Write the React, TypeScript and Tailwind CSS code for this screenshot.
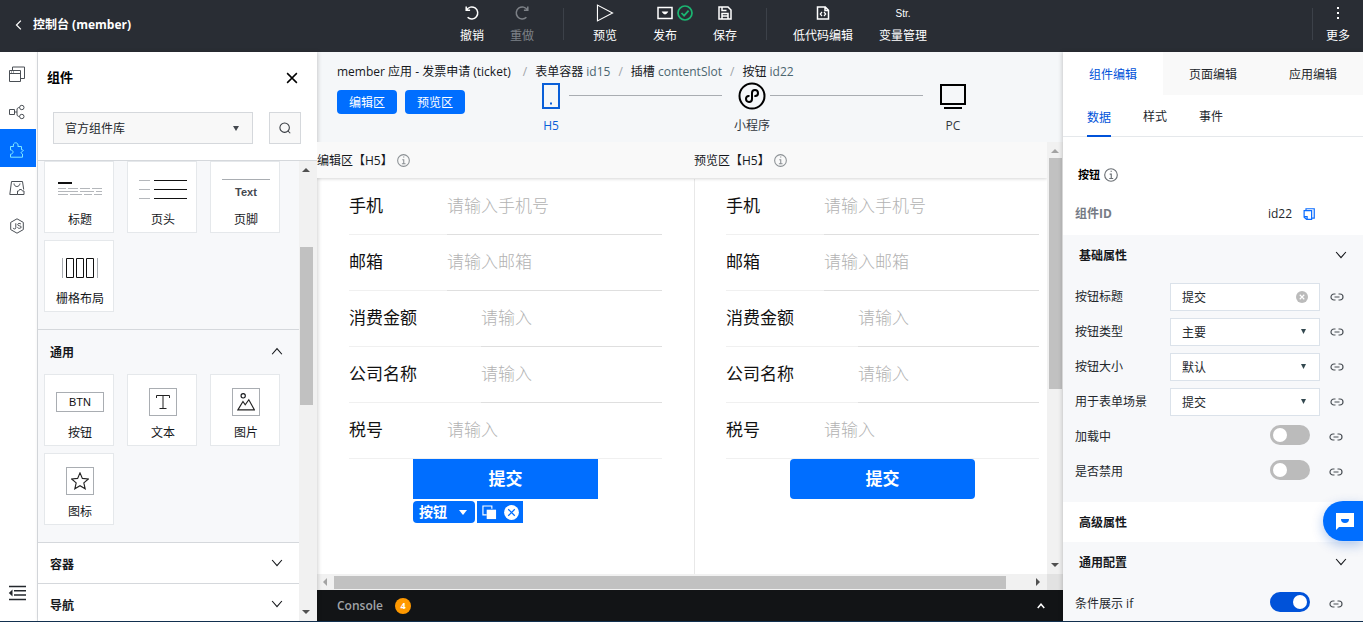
import type { ReactNode } from 'react';

type Children = { children: ReactNode };

function Icon({ size = 16, stroke = 1, children }: { size?: number; stroke?: number; children: ReactNode }) {
  return (
    <svg width={size} height={size} viewBox="0 0 16 16" fill="none" stroke="currentColor" strokeWidth={stroke} aria-hidden="true" className="shrink-0">
      {children}
    </svg>
  );
}

function ToolButton({ label, icon, wide, muted }: { label: string; icon: ReactNode; wide?: 'sm' | 'md' | 'lg'; muted?: boolean }) {
  const width = wide === 'lg' ? 'w-20' : wide === 'md' ? 'w-[60px]' : 'w-[50px]';
  return (
    <button type="button" className={`flex shrink-0 flex-col items-center gap-1 ${width} ${muted ? 'text-[#7d8187]' : 'text-white'}`}>
      <span className="flex h-[18px] items-center justify-center">{icon}</span>
      <span className="leading-5">{label}</span>
    </button>
  );
}

function Header() {
  return (
    <header className="flex h-[52px] shrink-0 bg-[#292d34] text-xs text-white">
      <div className="flex min-w-0 flex-1 items-center pb-[2px] pl-[14px]">
        <a href="#console" className="flex items-center gap-[9px] whitespace-nowrap font-bold">
          <Icon size={10} stroke={2}>
            <path d="M11 1 4 8l7 7" />
          </Icon>
          控制台 (member)
        </a>
      </div>
      <nav className="flex items-start pl-[13px] pt-1" aria-label="工具栏">
        <ToolButton
          label="撤销"
          icon={
            <Icon stroke={1.5}>
              <path d="M2.2 1.5v3.7h3.9M2.5 5A6 6 0 1 1 3.6 12.3" />
            </Icon>
          }
        />
        <ToolButton
          label="重做"
          muted
          icon={
            <Icon stroke={1.5}>
              <path d="M13.8 1.5v3.7H9.9M13.5 5a6 6 0 1 0-1.1 7.3" />
            </Icon>
          }
        />
        <i className="ml-4 mr-[11px] mt-1 h-8 w-px bg-[#3c4149]" />
        <ToolButton
          label="预览"
          wide="md"
          icon={
            <Icon size={18}>
              <path d="M1.3 1v14l13.4-7z" />
            </Icon>
          }
        />
        <button type="button" className="flex w-[60px] shrink-0 flex-col items-center gap-1">
          <span className="relative flex h-[18px] items-center">
            <Icon stroke={1.5}>
              <path d="M1 2.5h14v11H1z" />
              <path d="M5 6.8h6L9 9H7z" fill="currentColor" strokeWidth=".5" />
            </Icon>
            <span className="absolute left-5 top-[1px] text-[#1bb571]">
              <Icon stroke={1.7}>
                <circle cx="8" cy="8" r="7" />
                <path d="m4.5 8 2.6 2.7 4.5-5" strokeWidth="1.8" />
              </Icon>
            </span>
          </span>
          <span className="leading-5">发布</span>
        </button>
        <ToolButton
          label="保存"
          wide="md"
          icon={
            <Icon stroke={1.5}>
              <path d="M2 2h9l3 3v9H2zM5 14V8.5h6V14M5 2v3.5h4.5M5 11h6" />
            </Icon>
          }
        />
        <i className="ml-[11px] mr-4 mt-1 h-8 w-px bg-[#3c4149]" />
        <ToolButton
          label="低代码编辑"
          wide="lg"
          icon={
            <Icon stroke={1.5}>
              <path d="M2.5 2h7.8L13.5 5.2V14h-11zM10 2v3.5h3.5" />
              <path d="M7 7 5.3 9 7 11M9 7l1.7 2L9 11" strokeWidth="1.2" />
            </Icon>
          }
        />
        <ToolButton label="变量管理" wide="lg" icon={<span className="pt-[2px] font-['Liberation_Sans',Arial,sans-serif] text-[10px]">Str.</span>} />
      </nav>
      <div className="flex min-w-0 flex-1 items-start justify-end pt-1">
        <i className="mt-1 h-8 w-px bg-[#3c4149]" />
        <ToolButton
          label="更多"
          icon={
            <Icon>
              <path d="M7 2h2v2H7zM7 7h2v2H7zM7 12h2v2H7z" fill="currentColor" stroke="none" />
            </Icon>
          }
        />
      </div>
    </header>
  );
}

function RailButton({ label, active, children }: { label: string; active?: boolean; children: ReactNode }) {
  return (
    <button type="button" aria-label={label} className={`flex h-[38px] w-9 items-center justify-center pb-px pr-[3px] pt-[5px] ${active ? 'bg-[#006eff] text-[#7fe8ff]' : 'text-[#4a4f55]'}`}>
      {children}
    </button>
  );
}

function Rail() {
  return (
    <nav className="flex w-[38px] shrink-0 flex-col border-r border-[#dcdfe3] bg-white pt-px" aria-label="侧栏">
      <RailButton label="页面">
        <Icon>
          <path d="M.5 4.500h11v11H.5zM.5 7.500h11M3.500 4.500v-3.500h12v11.500h-4M2 6h1M4 6h1" />
        </Icon>
      </RailButton>
      <RailButton label="数据">
        <Icon>
          <path d="M.5 5.500h5v5h-5zM5.500 8h2.500M10.500 3.500C8.500 3.500 8 4.500 8 6v4c0 1.500.5 2.500 2.500 2.500" />
          <circle cx="12.800" cy="3.500" r="2.200" />
          <circle cx="12.800" cy="12.500" r="2.200" />
        </Icon>
      </RailButton>
      <RailButton label="组件" active>
        <Icon>
          <path d="M1.500 4.500h3c-.6-2.100.3-3.700 2.200-3.700s2.800 1.600 2.200 3.700h3.600v3.200c2.300.2 2.500 1 .8 1.700-1.700.800-1.700 1.800.2 2.600v3.200h-12v-3c2-.2 2.500-1.200 2.500-2.200s-.6-1.900-2.500-2z" />
        </Icon>
      </RailButton>
      <RailButton label="素材">
        <Icon>
          <path d="M8.500 14.500H.8L2.500 1.500h11l1.200 8M5 3.500c.2 4 5.500 4 6 0M8.500 14.500v-3.500c1.500 0 2-.5 2-1.500h2c0 1 .5 1.500 2.500 1.500v3.500z" />
        </Icon>
      </RailButton>
      <RailButton label="脚本">
        <Icon>
          <path d="m8 .8 6.300 3.600v7.200L8 15.200l-6.300-3.600V4.400z" />
          <path d="M6.800 5.300v4.500c0 1.500-2.300 1.600-2.600.1M12 6.200c-.7-1.200-3.300-1-3.300.4 0 1.700 3.500.7 3.500 2.400 0 1.700-3 1.800-3.800.4" />
        </Icon>
      </RailButton>
      <button type="button" aria-label="收起" className="mb-5 mt-auto flex justify-center pr-[3px] text-[#23272c]">
        <svg width="18" height="16" viewBox="0 0 18 16" fill="none" stroke="currentColor" strokeWidth="1.600" aria-hidden="true">
          <path d="M1 1.500h17M6 5.800h12M6 10h12M1 14.500h17" />
          <path d="M4.500 4.500v7L.8 8z" fill="currentColor" stroke="none" />
        </svg>
      </button>
    </nav>
  );
}

function Chevron({ up }: { up?: boolean }) {
  return (
    <Icon size={12} stroke={1.5}>
      <path d={up ? 'm1.500 11 6.500-7.500 6.500 7.500' : 'm1.500 4 6.500 7.500 6.500-7.500'} />
    </Icon>
  );
}

function Card({ label, children }: { label: string; children: ReactNode }) {
  return (
    <button type="button" className="flex h-[72px] w-[70px] flex-col items-center border border-[#e5e8eb] bg-white pl-[2px] text-[#16181c]">
      <span className="flex h-[54px] items-center justify-center">{children}</span>
      <span className="-mt-[6px] leading-5">{label}</span>
    </button>
  );
}

function Framed({ children }: Children) {
  return <span className="flex h-7 w-7 items-center justify-center border border-[#a9adb2]">{children}</span>;
}

function Arrow({ dir, dark }: { dir: 'up' | 'down' | 'left' | 'right'; dark?: boolean }) {
  const d = { up: 'M0 6h8L4 2z', down: 'M0 2h8L4 6z', left: 'M6 0v8L2 4z', right: 'M2 0v8l4-4z' }[dir];
  return (
    <svg width="8" height="8" viewBox="0 0 8 8" fill={dark ? '#505050' : '#a3a3a3'} aria-hidden="true" className="shrink-0">
      <path d={d} />
    </svg>
  );
}

function ComponentPanel() {
  return (
    <aside className="z-10 flex w-[279px] shrink-0 flex-col bg-white shadow-[1px_0_4px_rgba(0,0,0,0.18)]">
      <div className="flex h-[52px] items-center justify-between pl-[9px] pr-[19px]">
        <h2 className="text-[13px] font-bold text-black">组件</h2>
        <button type="button" aria-label="关闭" className="text-black">
          <Icon size={12} stroke={2}>
            <path d="m1.500 1.500 13 13M14.500 1.500l-13 13" />
          </Icon>
        </button>
      </div>
      <div className="flex gap-4 pb-4 pl-[15px] pr-4 pt-2">
        <div className="relative flex-1">
          <select aria-label="组件库" className="h-8 w-full appearance-none border border-[#d5d8dc] bg-[#f8f8f8] pl-[11px] pt-[2px] text-[#23272c]">
            <option>官方组件库</option>
          </select>
          <svg width="6" height="6" viewBox="0 0 6 6" fill="#44494f" aria-hidden="true" className="pointer-events-none absolute right-[14px] top-[13px]">
            <path d="M0 1h6L3 6z" />
          </svg>
        </div>
        <button type="button" aria-label="搜索" className="flex h-8 w-8 items-center justify-center border border-[#d5d8dc] bg-[#f8f8f8] text-[#33383e]">
          <Icon size={12} stroke={1.4}>
            <circle cx="7.500" cy="7.500" r="6.300" />
            <path d="m12 12 3 3" />
          </Icon>
        </button>
      </div>
      <div className="flex min-h-0 flex-1 border-t border-[#d5d8dc]">
        <div className="min-w-0 flex-1 overflow-hidden bg-[#f7f8fa]">
          <section className="flex flex-wrap gap-x-[13px] gap-y-[7px] border-b border-[#d5d8dc] pb-[17px] pl-[6px]">
            <Card label="标题">
              <svg width="44" height="14" viewBox="0 0 44 14" stroke="#b4b7bb" aria-hidden="true">
                <path d="M0 1h14" stroke="#111" strokeWidth="2" />
                <path d="M0 6.500h8M10 6.500h10M22 6.500h10M34 6.500h10M0 9.500h20M22 9.500h14M38 9.500h6M0 12.500h10M12 12.500h12M26 12.500h8M36 12.500h8" />
              </svg>
            </Card>
            <Card label="页头">
              <svg width="48" height="20" viewBox="0 0 48 20" stroke="#111" aria-hidden="true">
                <path d="M15 1.500h33M15 10.500h33M15 19.500h33" />
                <path d="M0 1.500h11M0 10.500h11M0 19.500h11" stroke="#b4b7bb" />
              </svg>
            </Card>
            <Card label="页脚">
              <span className="flex w-12 flex-col items-center border-t border-[#a9adb2] pt-1 font-['Liberation_Sans',Arial,sans-serif] text-[11px] font-bold leading-4 text-[#44494f]">Text</span>
            </Card>
            <Card label="栅格布局">
              <svg width="36" height="22" viewBox="0 0 36 22" fill="none" stroke="#111" aria-hidden="true">
                <path d="M4.500 1.500h7v19h-7zM14.500 1.500h7v19h-7zM24.500 1.500h7v19h-7z" />
                <path d="M.5 1v20M35.500 1v20" stroke="#a9adb2" />
              </svg>
            </Card>
          </section>
          <section className="border-b border-[#d5d8dc] pb-[17px] pl-[6px]">
            <h3>
              <button type="button" className="flex h-11 w-full items-center justify-between pl-[6px] pr-4 font-bold text-[#16181c]">
                <span className="pt-[2px]">通用</span>
                <Chevron up />
              </button>
            </h3>
            <div className="flex flex-wrap gap-x-[13px] gap-y-[7px]">
              <Card label="按钮">
                <span className="flex h-5 w-12 items-center justify-center border border-[#a9adb2] font-['Liberation_Sans',Arial,sans-serif] text-[11px] text-[#111]">BTN</span>
              </Card>
              <Card label="文本">
                <Framed>
                  <Icon>
                    <path d="M1.500 4V1.500h13V4M8 1.500v13M4.500 14.500h7" stroke="#222" />
                  </Icon>
                </Framed>
              </Card>
              <Card label="图片">
                <Framed>
                  <Icon size={18}>
                    <circle cx="5.500" cy="2.500" r="1.900" />
                    <path d="m.8 15 4.500-7.500 2 3L10.500 6l5 9z" stroke="#222" />
                  </Icon>
                </Framed>
              </Card>
              <Card label="图标">
                <Framed>
                  <Icon size={18}>
                    <path d="m8 .8 2.100 4.900 5.300.5-4 3.500 1.200 5.200L8 12.200l-4.600 2.700 1.200-5.200-4-3.500 5.300-.5z" stroke="#222" />
                  </Icon>
                </Framed>
              </Card>
            </div>
          </section>
          <h3 className="border-b border-[#d5d8dc] bg-white">
            <button type="button" className="flex h-10 w-full items-center justify-between pl-3 pr-4 font-bold text-[#16181c]">
              <span className="pt-1">容器</span>
              <Chevron />
            </button>
          </h3>
          <h3 className="bg-white">
            <button type="button" className="flex h-10 w-full items-center justify-between pl-3 pr-4 font-bold text-[#16181c]">
              <span className="pt-1">导航</span>
              <Chevron />
            </button>
          </h3>
        </div>
        <div className="flex w-[18px] flex-col items-center bg-[#f1f1f1] py-[5px] pr-1">
          <Arrow dir="up" dark />
          <span className="mt-[73px] h-[158px] w-[13px] bg-[#c1c1c1]" />
          <span className="mt-auto">
            <Arrow dir="down" dark />
          </span>
        </div>
      </div>
    </aside>
  );
}

function InfoIcon({ size = 13 }: { size?: number }) {
  return (
    <Icon size={size} stroke={1.3}>
      <circle cx="8" cy="8" r="7.200" />
      <path d="M6.500 7h1.800v4.800M6 12h4.500M7.500 3.700h1.500" />
    </Icon>
  );
}

function Breadcrumb() {
  const items = [
    ['表单容器', 'id15'],
    ['插槽', 'contentSlot'],
    ['按钮', 'id22'],
  ];
  return (
    <ol className="flex items-center whitespace-nowrap pt-[10px] leading-5 text-[#16181c]">
      <li>member 应用 - 发票申请 (ticket)</li>
      {items.map(([name, id], i) => (
        <li key={id} className="flex">
          <span className={i === 0 ? 'pl-3 pr-2 text-[#a0a4a8]' : 'px-2 text-[#a0a4a8]'}>/</span>
          {name}&nbsp;<span className="text-[#4c6670]">{id}</span>
        </li>
      ))}
    </ol>
  );
}

function Device({ label, active, children }: { label: string; active?: boolean; children: ReactNode }) {
  return (
    <button type="button" className={`flex w-9 shrink-0 flex-col items-center whitespace-nowrap ${active ? 'text-[#0a5fd8]' : 'text-black'}`}>
      <span className="flex h-7 items-center">{children}</span>
      <span className={`mt-[6px] leading-5 ${active ? '' : 'text-[#33383e]'}`}>{label}</span>
    </button>
  );
}

function DeviceBar() {
  return (
    <div className="flex min-w-0 flex-1">
      <Device label="H5" active>
        <svg width="18" height="26" viewBox="0 0 18 26" fill="none" stroke="currentColor" strokeWidth="2" aria-hidden="true">
          <path d="M1 1h16v24H1z" />
          <path d="M8 20.500h2" />
        </svg>
      </Device>
      <i className="mr-3 mt-[13px] h-px flex-1 bg-[#a9adb2]" />
      <Device label="小程序">
        <svg width="28" height="28" viewBox="0 0 28 28" fill="none" stroke="currentColor" strokeWidth="2" aria-hidden="true">
          <circle cx="14" cy="14" r="12.500" />
          <path d="M10.800 13.900a3 3 0 1 0 3.200 3v-5.800a3 3 0 1 1 3.200 3" strokeLinecap="round" />
        </svg>
      </Device>
      <i className="mr-3 mt-[13px] h-px flex-1 bg-[#a9adb2]" />
      <Device label="PC">
        <svg width="26" height="26" viewBox="0 0 26 26" fill="none" stroke="currentColor" strokeWidth="2" aria-hidden="true">
          <path d="M1 2h24v19H1zM4 25h18" />
        </svg>
      </Device>
    </div>
  );
}

const fields = [
  ['手机', '请输入手机号'],
  ['邮箱', '请输入邮箱'],
  ['消费金额', '请输入'],
  ['公司名称', '请输入'],
  ['税号', '请输入'],
];

function TicketForm({ id, children }: { id: string; children: ReactNode }) {
  return (
    <form className="px-8">
      {fields.map(([label, hint], i) => (
        <div key={label} className="flex h-14 border-b border-[#f0f0f0] text-[17px]">
          <label htmlFor={`${id}-${i}`} className="mr-16 shrink-0 leading-[54px] text-[#111]">
            {label}
          </label>
          <input
            id={`${id}-${i}`}
            placeholder={hint}
            className={`-mb-px min-w-0 flex-1 border-b pb-px font-light outline-none placeholder:text-[#b2b2b2] ${i === fields.length - 1 ? 'border-transparent' : 'border-[#dfdfdf]'}`}
          />
        </div>
      ))}
      {children}
    </form>
  );
}

function Workspace() {
  return (
    <main className="flex min-w-0 flex-1 flex-col bg-[#f5f7f9]">
      <div className="pl-5 pr-[92px]">
        <Breadcrumb />
        <div className="flex h-[60px]">
          <div className="mr-[68px] flex items-start gap-2 pt-2">
            <button type="button" className="h-6 w-[60px] rounded-sm bg-[#006eff] leading-[26px] text-white">
              编辑区
            </button>
            <button type="button" className="h-6 w-[60px] rounded-sm bg-[#006eff] leading-[26px] text-white">
              预览区
            </button>
          </div>
          <DeviceBar />
        </div>
      </div>
      <div className="flex min-h-0 flex-1">
        <div className="flex min-w-0 flex-1 flex-col overflow-hidden bg-white">
          <div className="z-10 flex h-9 shrink-0 items-center whitespace-nowrap bg-[#f9f9f9] text-[#16181c] shadow-[0_1px_3px_rgba(0,0,0,0.16)]">
            <h2 className="flex w-[377px] shrink-0 items-center gap-1">
              <span className="pt-px">编辑区【H5】</span>
              <span className="text-[#8b9094]">
                <InfoIcon />
              </span>
            </h2>
            <h2 className="flex w-[377px] shrink-0 items-center gap-1">
              <span className="pt-px">预览区【H5】</span>
              <span className="text-[#8b9094]">
                <InfoIcon />
              </span>
            </h2>
          </div>
          <div className="flex min-h-0 flex-1 pt-px">
            <div className="w-[377px] shrink-0">
              <TicketForm id="edit">
                <div className="mx-auto w-[185px]">
                  <button type="button" className="h-10 w-full bg-[#006eff] text-[17px] font-bold text-white">
                    提交
                  </button>
                  <div className="flex gap-[2px] pt-[2px]">
                    <button type="button" className="flex h-[22px] w-[62px] items-center justify-between rounded-sm bg-[#006eff] pl-[6px] pr-2 text-sm font-bold text-white">
                      按钮
                      <svg width="8" height="5" viewBox="0 0 8 5" fill="currentColor" aria-hidden="true">
                        <path d="M0 0h8L4 5z" />
                      </svg>
                    </button>
                    <div className="flex h-[22px] w-[46px] items-center gap-[7px] bg-[#006eff] pl-[5px] text-white">
                      <button type="button" aria-label="复制">
                        <Icon size={15}>
                          <path d="M5 10.500H1V1h9.500v3" strokeWidth="1.200" />
                          <path d="M5 5h10v10H5z" fill="currentColor" stroke="none" />
                        </Icon>
                      </button>
                      <button type="button" aria-label="删除">
                        <Icon size={15}>
                          <circle cx="8" cy="8" r="7.900" fill="currentColor" stroke="none" />
                          <path d="m4.500 4.500 7 7M11.500 4.500l-7 7" stroke="#006eff" strokeWidth="1.300" />
                        </Icon>
                      </button>
                    </div>
                  </div>
                </div>
              </TicketForm>
            </div>
            <div className="w-[377px] shrink-0 shadow-[inset_1px_0_0_#e8e8e8]">
              <TicketForm id="preview">
                <button type="button" className="mx-auto block h-10 w-[185px] rounded-[4px] bg-[#006eff] text-[17px] font-bold text-white">
                  提交
                </button>
              </TicketForm>
            </div>
          </div>
        </div>
        <div className="flex w-4 flex-col items-center bg-[#f1f1f1] py-[5px]">
          <Arrow dir="up" />
          <span className="mt-[3px] h-[231px] w-[13px] bg-[#c1c1c1]" />
          <span className="mt-auto">
            <Arrow dir="down" dark />
          </span>
        </div>
      </div>
      <div className="flex h-4 shrink-0 items-center bg-[#e2e2e2] pr-4">
        <div className="flex h-4 flex-1 items-center bg-[#f1f1f1] pl-1 pr-[5px]">
          <Arrow dir="left" />
          <span className="ml-[5px] mr-7 h-[13px] flex-1 bg-[#c1c1c1]" />
          <Arrow dir="right" dark />
        </div>
      </div>
      <button type="button" className="flex h-[31px] shrink-0 items-center bg-[#121416] px-5 text-[#a0a4a8]">
        <span className="pt-px font-semibold">Console</span>
        <span className="ml-3 flex h-4 w-4 items-center justify-center rounded-full bg-[#ff9900] text-[9px] font-bold text-white">4</span>
        <span className="ml-auto -mr-[2px] text-white">
          <Icon size={8} stroke={3}>
            <path d="m1.500 12 6.500-7.500 6.500 7.500" />
          </Icon>
        </span>
      </button>
    </main>
  );
}

function LinkIcon() {
  return (
    <button type="button" aria-label="绑定数据" className="shrink-0 text-[#4a4f55]">
      <svg width="14" height="8" viewBox="0 0 14 8" fill="none" stroke="currentColor" strokeWidth="1.200" aria-hidden="true">
        <path d="M5.500 7H4a3 3 0 0 1 0-6h1.500M8.500 1H10a3 3 0 0 1 0 6H8.500M4.500 4h5" />
      </svg>
    </button>
  );
}

function SelectRow({ id, label, value }: { id: string; label: string; value: string }) {
  return (
    <div className="flex h-[35px] items-center pl-3 pr-[19px]">
      <label htmlFor={id} className="w-[95px] shrink-0">
        {label}
      </label>
      <div className="relative mr-[10px] flex-1">
        <select id={id} className="block h-7 w-full appearance-none border border-[#dbe2ea] bg-white pl-[11px] pt-[2px]">
          <option>{value}</option>
        </select>
        <svg width="5" height="5" viewBox="0 0 5 5" fill="#33484f" aria-hidden="true" className="pointer-events-none absolute right-[14px] top-[11px]">
          <path d="M0 0h5L2.500 5z" />
        </svg>
      </div>
      <LinkIcon />
    </div>
  );
}

function SwitchRow({ id, label, on }: { id: string; label: string; on?: boolean }) {
  return (
    <div className="flex h-[35px] items-center pl-3 pr-5">
      <label htmlFor={id} className="flex-1">
        {label}
      </label>
      <input
        id={id}
        type="checkbox"
        role="switch"
        defaultChecked={on}
        className="mb-[3px] mr-[19px] h-5 w-10 appearance-none rounded-full bg-[#bbbbbb] p-[3px] before:block before:h-[14px] before:w-[14px] before:rounded-full before:bg-white checked:bg-[#0052d9] checked:before:ml-5"
      />
      <LinkIcon />
    </div>
  );
}

function SectionTitle({ title, chevron = true }: { title: string; chevron?: boolean }) {
  return (
    <h3>
      <button type="button" className="flex h-10 w-full items-center justify-between pl-4 pr-4 font-bold text-[#16181c]">
        <span className="pt-[2px]">{title}</span>
        {chevron && <Chevron />}
      </button>
    </h3>
  );
}

function Inspector() {
  return (
    <aside className="z-10 flex w-[300px] shrink-0 flex-col overflow-hidden bg-[#f7f8fa] text-[#23272c] shadow-[-1px_0_4px_rgba(0,0,0,0.18)]">
      <div className="flex h-[43px] shrink-0 bg-[#f9f9f9]">
        <button type="button" className="flex-1 bg-white pt-[3px] text-[#0052d9]">
          组件编辑
        </button>
        <button type="button" className="flex-1 pt-[3px]">
          页面编辑
        </button>
        <button type="button" className="flex-1 pt-[3px]">
          应用编辑
        </button>
      </div>
      <div className="flex h-[42px] shrink-0 gap-8 border-b border-[#e5e8eb] bg-white pl-6">
        <button type="button" className="-mb-px border-b-2 border-[#0052d9] pt-[5px] text-[#0052d9]">
          数据
        </button>
        <button type="button" className="pt-[3px]">样式</button>
        <button type="button" className="pt-[3px]">事件</button>
      </div>
      <div className="shrink-0 bg-white pb-[11px] pt-7">
        <h2 className="flex h-5 items-center gap-1 pl-[15px] text-[11px] font-bold text-black">
          按钮
          <span className="text-[#6b7075]">
            <InfoIcon size={14} />
          </span>
        </h2>
        <div className="mt-[19px] flex h-5 items-center pl-3 pr-12">
          <span className="font-bold text-[#767b85]">组件ID</span>
          <span className="ml-auto mr-[11px]">id22</span>
          <button type="button" aria-label="复制ID" className="text-[#0a6cff]">
            <Icon size={12} stroke={1.6}>
              <path d="M4 3V1h11v12.500h-3M1.500 3.500h10v11.700H4.800l-3.300-3zM2 11.500h3.500V15" />
            </Icon>
          </button>
        </div>
      </div>
      <section className="shrink-0 pb-[13px]">
        <SectionTitle title="基础属性" />
        <div className="pt-1">
          <div className="flex h-[35px] items-center pl-3 pr-[19px]">
            <label htmlFor="title" className="w-[95px] shrink-0">
              按钮标题
            </label>
            <div className="relative mr-[10px] flex-1">
              <input id="title" defaultValue="提交" className="block h-7 w-full border border-[#dbe2ea] bg-white pl-[11px] outline-none" />
              <button type="button" aria-label="清空" className="absolute right-3 top-2">
                <Icon size={12}>
                  <circle cx="8" cy="8" r="8" fill="#bbbbbb" stroke="none" />
                  <path d="m5 5 6 6M11 5l-6 6" stroke="#fff" strokeWidth="1.500" />
                </Icon>
              </button>
            </div>
            <LinkIcon />
          </div>
          <SelectRow id="type" label="按钮类型" value="主要" />
          <SelectRow id="size" label="按钮大小" value="默认" />
          <SelectRow id="scene" label="用于表单场景" value="提交" />
          <SwitchRow id="loading" label="加载中" />
          <SwitchRow id="disabled" label="是否禁用" />
        </div>
      </section>
      <section className="shrink-0 bg-white">
        <SectionTitle title="高级属性" chevron={false} />
      </section>
      <section className="shrink-0">
        <SectionTitle title="通用配置" />
        <div className="pt-1">
          <SwitchRow id="cond" label="条件展示 if" on />
        </div>
      </section>
    </aside>
  );
}

export default function App() {
  return (
    <div className="relative flex h-screen min-w-[1100px] flex-col overflow-hidden border-b border-[#12304f] bg-white font-['Open_Sans','Noto_Sans_CJK_SC',sans-serif] text-xs">
      <Header />
      <div className="flex min-h-0 flex-1">
        <Rail />
        <ComponentPanel />
        <Workspace />
        <Inspector />
      </div>
      <button type="button" aria-label="客服" className="absolute bottom-20 right-0 z-20 flex h-10 w-10 items-center rounded-l-full bg-[#006eff] pl-[13px] text-white shadow-[0_4px_12px_rgba(0,80,200,0.3)]">
        <svg width="18" height="17" viewBox="0 0 18 17" fill="currentColor" aria-hidden="true">
          <path d="M0 0h18v14H3l-3 3z" />
          <path d="M5 6h8a4 4 0 0 1-8 0z" fill="#006eff" />
        </svg>
      </button>
    </div>
  );
}
